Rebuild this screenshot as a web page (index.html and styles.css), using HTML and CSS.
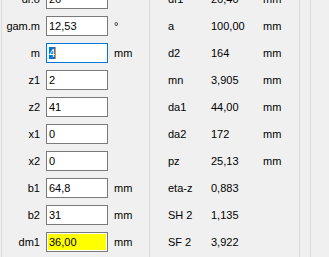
FILE: index.html
```html
<!DOCTYPE html>
<html lang="en">
<head>
  <meta charset="UTF-8" />
  <title>Worm gear data</title>
  <link rel="stylesheet" href="styles.css">
</head>
<body>
  <div class="frame">
    <!-- input values -->
    <div class="group left">
      <div class="label">dr.o</div><div class="box">26</div><div class="unit"></div>
      <div class="label">gam.m</div><div class="box">12,53</div><div class="unit">°</div>
      <div class="label">m</div><div class="box focus"><span class="sel">4</span><span class="caret"></span></div><div class="unit">mm</div>
      <div class="label">z1</div><div class="box">2</div><div class="unit"></div>
      <div class="label">z2</div><div class="box">41</div><div class="unit"></div>
      <div class="label">x1</div><div class="box">0</div><div class="unit"></div>
      <div class="label">x2</div><div class="box">0</div><div class="unit"></div>
      <div class="label">b1</div><div class="box">64,8</div><div class="unit">mm</div>
      <div class="label">b2</div><div class="box">31</div><div class="unit">mm</div>
      <div class="label">dm1</div><div class="box result">36,00</div><div class="unit">mm</div>
    </div>

    <!-- computed values -->
    <div class="group right">
      <div class="name">df1</div><div class="value">26,40</div><div class="unit">mm</div>
      <div class="name">a</div><div class="value">100,00</div><div class="unit">mm</div>
      <div class="name">d2</div><div class="value">164</div><div class="unit">mm</div>
      <div class="name">mn</div><div class="value">3,905</div><div class="unit">mm</div>
      <div class="name">da1</div><div class="value">44,00</div><div class="unit">mm</div>
      <div class="name">da2</div><div class="value">172</div><div class="unit">mm</div>
      <div class="name">pz</div><div class="value">25,13</div><div class="unit">mm</div>
      <div class="name">eta-z</div><div class="value">0,883</div><div class="unit"></div>
      <div class="name">SH 2</div><div class="value">1,135</div><div class="unit"></div>
      <div class="name">SF 2</div><div class="value">3,922</div><div class="unit"></div>
    </div>

    <div class="strip"></div>
  </div>
</body>
</html>
```

FILE: styles.css
```css
body {
  margin: 0;
  background: #f0f0f0;
  font-family: "Liberation Sans", Arial, sans-serif;
  font-size: 11px;
  color: #000;
  overflow: hidden;
}

.frame {
  display: flex;
  height: 257px;
  padding-left: 1px;
}

.group {
  display: grid;
  grid-auto-rows: 20px;
  row-gap: 7px;
  align-content: start;
  margin-top: -11px;
}

.left {
  width: 147px;
  border-left: 1px solid #d9d9d9;
  border-right: 1px solid #d9d9d9;
  grid-template-columns: 44px 62px 41px;
}

.right {
  width: 149px;
  border-right: 1px solid #d9d9d9;
  grid-template-columns: 61px 52px 36px;
}

.strip {
  width: 10px;
  border-right: 1px solid #d9d9d9;
}

.label {
  text-align: right;
  padding-right: 6px;
  line-height: 20px;
}

.unit {
  padding-left: 6px;
  line-height: 20px;
}

.right .unit {
  padding-left: 0;
}

.name {
  padding-left: 18px;
  line-height: 20px;
}

.value {
  line-height: 20px;
}

.box {
  box-sizing: border-box;
  height: 20px;
  border: 1px solid #7a7a7a;
  background: #fff;
  padding-left: 2px;
  line-height: 18px;
  display: flex;
  align-items: center;
}

.box.focus {
  border-color: #0078d7;
}

.sel {
  background: #0078d7;
  color: #fff;
  line-height: 12px;
}

.caret {
  width: 1px;
  height: 12px;
  background: #ff8728;
}

.box.result {
  background: #ffff00;
  box-shadow: inset 0 0 0 1px #fff;
}
```
